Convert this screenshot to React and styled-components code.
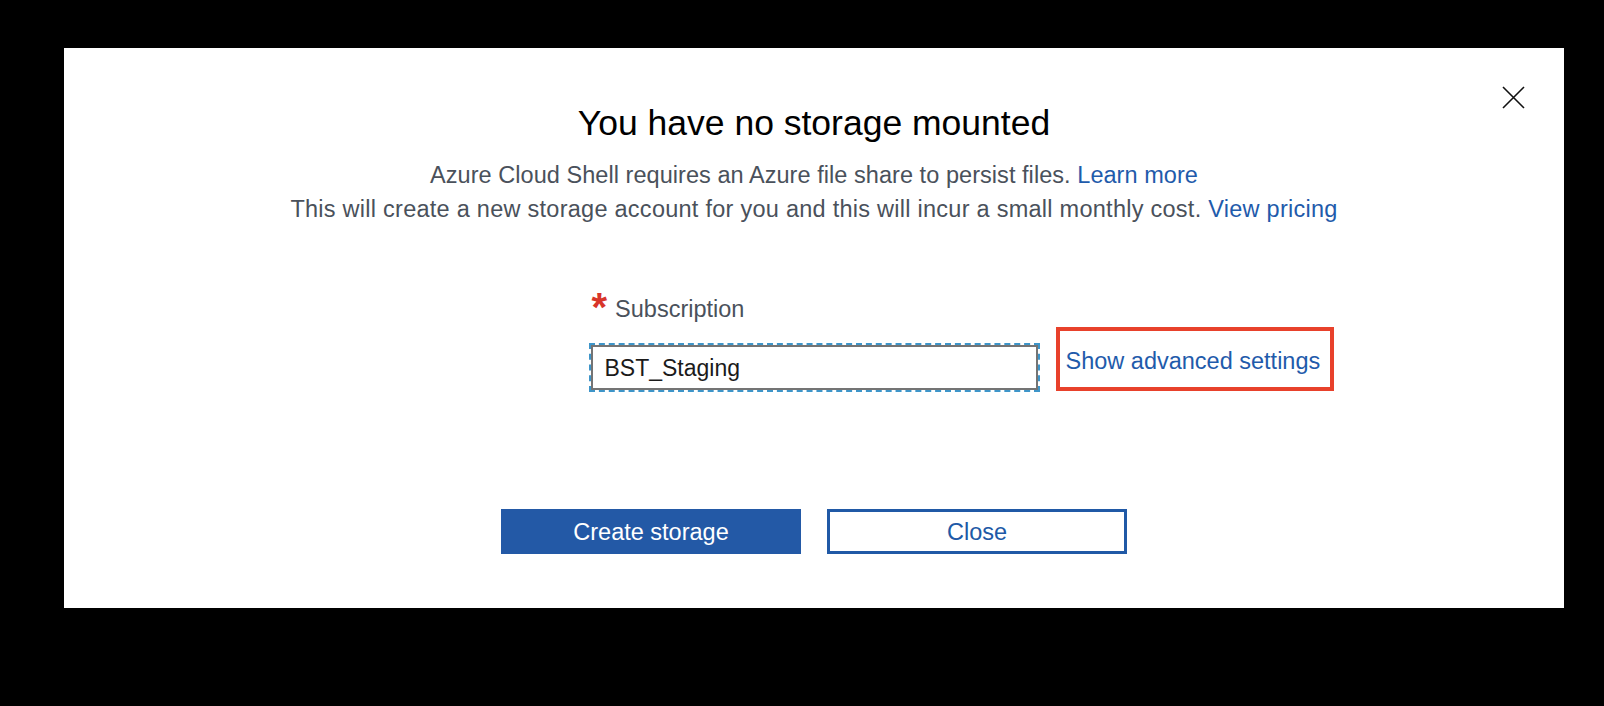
import styled, { createGlobalStyle } from "styled-components";

const GlobalStyle = createGlobalStyle`
  html, body {
    margin: 0;
    padding: 0;
    background: #000;
  }
  body {
    font-family: "Liberation Sans", Arial, sans-serif;
  }
`;

const Page = styled.div`
  width: 1604px;
  height: 706px;
  padding: 48px 0 0 64px;
  box-sizing: border-box;
  background: #000;
`;

const Modal = styled.div`
  position: relative;
  width: 1500px;
  height: 560px;
  background: #fff;
  padding-top: 55px;
  box-sizing: border-box;
  display: flex;
  flex-direction: column;
  align-items: center;
`;

const CloseIcon = styled.button`
  position: absolute;
  top: 38px;
  right: 39px;
  width: 23px;
  height: 23px;
  padding: 0;
  border: none;
  background: transparent;
  cursor: pointer;
  svg {
    display: block;
  }
`;

const Title = styled.h1`
  margin: 0;
  font-size: 35.5px;
  line-height: 40px;
  font-weight: 400;
  color: #000;
`;

const Intro = styled.div`
  margin-top: 15px;
  display: flex;
  flex-direction: column;
  align-items: center;
  font-size: 23.5px;
  line-height: 34px;
  color: #4a515b;
`;

const IntroLine = styled.p`
  margin: 0;
  letter-spacing: ${(p) => p.spacing || 0}px;
`;

const Link = styled.a`
  color: #1f5bab;
  text-decoration: none;
  cursor: pointer;
`;

const Form = styled.div`
  margin-top: 70px;
  width: 100%;
  display: grid;
  grid-template-columns: 1fr 447px 1fr;
  column-gap: 18px;
  align-items: end;
`;

const Field = styled.div`
  grid-column: 2;
  display: flex;
  flex-direction: column;
`;

const Label = styled.label`
  font-size: 23.5px;
  line-height: 27px;
  color: #4a515b;
  margin-left: 1px;
`;

const Required = styled.span`
  color: #d8352a;
  font-size: 40px;
  font-weight: 700;
  line-height: 0;
  vertical-align: -4px;
  margin-right: 8px;
`;

const Input = styled.div`
  margin-top: 22px;
  height: 45px;
  box-sizing: border-box;
  border: 2px solid #747474;
  outline: 2px dashed #3e95c9;
  padding: 1px 12px 0;
  display: flex;
  align-items: center;
  font-size: 23px;
  color: #1b1b1b;
`;

const Advanced = styled.div`
  grid-column: 3;
  justify-self: start;
  width: 278px;
  height: 64px;
  margin-bottom: -1px;
  box-sizing: border-box;
  border: 4px solid #e8412b;
  padding: 5px 0 0 6px;
  display: flex;
  align-items: center;
  font-size: 23.5px;
`;

const Actions = styled.div`
  margin-top: 119px;
  display: flex;
  gap: 26px;
`;

const Button = styled.button`
  width: 300px;
  height: 45px;
  box-sizing: border-box;
  padding: 2px 0 0;
  font-family: "Liberation Sans", Arial, sans-serif;
  font-size: 23.5px;
  border-style: solid;
  border-color: #2059a6;
  border-width: ${(p) => (p.primary ? "0" : "3px")};
  background: ${(p) => (p.primary ? "#2359a6" : "#fff")};
  color: ${(p) => (p.primary ? "#fff" : "#2059a6")};
  cursor: pointer;
`;

export default function App() {
  return (
    <Page>
      <GlobalStyle />
      <Modal>
        <CloseIcon aria-label="Close">
          <svg width="23" height="23" viewBox="0 0 23 23">
            <path
              d="M1 1 L22 22 M22 1 L1 22"
              stroke="#111"
              strokeWidth="1.6"
              fill="none"
            />
          </svg>
        </CloseIcon>
        <Title>You have no storage mounted</Title>
        <Intro>
          <IntroLine spacing={0.05}>
            Azure Cloud Shell requires an Azure file share to persist files.{" "}
            <Link>Learn more</Link>
          </IntroLine>
          <IntroLine spacing={0.26}>
            This will create a new storage account for you and this will incur
            a small monthly cost. <Link>View pricing</Link>
          </IntroLine>
        </Intro>
        <Form>
          <Field>
            <Label>
              <Required>*</Required>Subscription
            </Label>
            <Input>BST_Staging</Input>
          </Field>
          <Advanced>
            <Link>Show advanced settings</Link>
          </Advanced>
        </Form>
        <Actions>
          <Button primary>Create storage</Button>
          <Button>Close</Button>
        </Actions>
      </Modal>
    </Page>
  );
}
